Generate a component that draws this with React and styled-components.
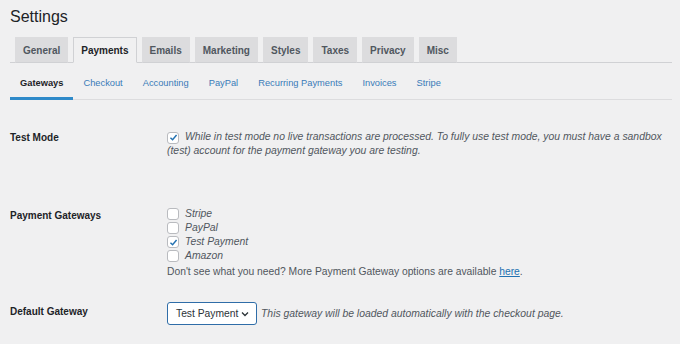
import React from "react";
import styled, { createGlobalStyle } from "styled-components";

const GlobalStyle = createGlobalStyle`
  html, body {
    margin: 0;
    padding: 0;
    background: #f0f0f1;
  }
  body {
    font-family: "Liberation Sans", Arial, sans-serif;
    color: #1d2327;
  }
`;

const Page = styled.div`
  padding: 0 8px 0 10px;
  width: 680px;
  height: 344px;
  box-sizing: border-box;
  overflow: hidden;
`;

const Title = styled.h1`
  margin: 0;
  padding-top: 7px;
  font-size: 16px;
  font-weight: 400;
  line-height: 20px;
  color: #1d2327;
`;

const TabBar = styled.div`
  display: flex;
  gap: 5px;
  margin-top: 10px;
  padding-left: 5px;
  border-bottom: 1px solid #d0d1d4;
  height: 25px;
`;

const Tab = styled.div`
  box-sizing: border-box;
  height: 26px;
  padding: 0 7px;
  display: flex;
  align-items: center;
  font-size: 10px;
  font-weight: 700;
  border: 1px solid ${(p) => (p.$active ? "#d0d1d4" : "#dcdcde")};
  border-bottom-color: ${(p) => (p.$active ? "#f0f0f1" : "#d0d1d4")};
  background: ${(p) => (p.$active ? "#f0f0f1" : "#dcdcde")};
  color: ${(p) => (p.$active ? "#1d2327" : "#50575e")};
`;

const SubNav = styled.div`
  display: flex;
  margin-top: 13px;
  border-bottom: 1px solid #dcdcde;
`;

const SubTab = styled.div`
  padding: 0 10px 7px;
  font-size: 9.3px;
  line-height: 14px;
  font-weight: ${(p) => (p.$active ? 700 : 400)};
  color: ${(p) => (p.$active ? "#1d2327" : "#3a7bb8")};
  border-bottom: 3px solid ${(p) => (p.$active ? "#2f8ac9" : "transparent")};
  margin-bottom: -1px;
`;

const Row = styled.div`
  display: grid;
  grid-template-columns: 157px 1fr;
  padding-top: ${(p) => p.$top}px;
`;

const Label = styled.div`
  margin-top: ${(p) => p.$offset}px;
  font-size: 10px;
  line-height: 14px;
  font-weight: 700;
  color: #1d2327;
`;

const Field = styled.div`
  max-width: 500px;
  font-size: 10.3px;
  line-height: 14px;
  color: #50575e;
`;

const Italic = styled.span`
  font-style: italic;
  font-size: 10.4px;
  color: #50575e;
`;

const Box = styled.span`
  display: inline-flex;
  align-items: center;
  justify-content: center;
  box-sizing: border-box;
  width: 12px;
  height: 12px;
  margin-right: 6px;
  vertical-align: -2px;
  border: 1px solid #b9bbbf;
  border-radius: 3px;
  background: #fff;
`;

const CheckLine = styled.div`
  display: flex;
  align-items: center;
  height: 14px;
`;

const Help = styled.div`
  margin-top: 2px;
  color: #50575e;
`;

const Link = styled.a`
  color: #2271b1;
  text-decoration: underline;
`;

const SelectRow = styled.div`
  display: flex;
  align-items: center;
  white-space: nowrap;
`;

const Select = styled.div`
  box-sizing: border-box;
  width: 90px;
  height: 23px;
  flex-shrink: 0;
  display: flex;
  align-items: center;
  justify-content: space-between;
  padding: 0 7px 0 8px;
  margin-right: 4px;
  border: 1px solid #2f6da8;
  border-radius: 3px;
  background: #fff;
  font-size: 10.3px;
  color: #2c3338;
`;

function Checkbox({ checked }) {
  return (
    <Box>
      {checked && (
        <svg width="9" height="9" viewBox="0 0 10 10">
          <path d="M1.6 5.2 L4 7.5 L8.4 2.2" fill="none" stroke="#2271b1" strokeWidth="1.6" />
        </svg>
      )}
    </Box>
  );
}

const tabs = ["General", "Payments", "Emails", "Marketing", "Styles", "Taxes", "Privacy", "Misc"];
const subTabs = ["Gateways", "Checkout", "Accounting", "PayPal", "Recurring Payments", "Invoices", "Stripe"];
const gateways = [
  { name: "Stripe", on: false },
  { name: "PayPal", on: false },
  { name: "Test Payment", on: true },
  { name: "Amazon", on: false }
];

export default function App() {
  return (
    <Page>
      <GlobalStyle />
      <Title>Settings</Title>
      <TabBar>
        {tabs.map((t) => (
          <Tab key={t} $active={t === "Payments"}>
            {t}
          </Tab>
        ))}
      </TabBar>
      <SubNav>
        {subTabs.map((t) => (
          <SubTab key={t} $active={t === "Gateways"}>
            {t}
          </SubTab>
        ))}
      </SubNav>

      <Row $top={30}>
        <Label $offset={1}>Test Mode</Label>
        <Field>
          <Checkbox checked />
          <Italic>
            While in test mode no live transactions are processed. To fully use test mode, you must have a sandbox
            (test) account for the payment gateway you are testing.
          </Italic>
        </Field>
      </Row>

      <Row $top={49}>
        <Label $offset={2}>Payment Gateways</Label>
        <Field>
          {gateways.map((g) => (
            <CheckLine key={g.name}>
              <Checkbox checked={g.on} />
              <Italic>{g.name}</Italic>
            </CheckLine>
          ))}
          <Help>
            Don't see what you need? More Payment Gateway options are available <Link>here</Link>.
          </Help>
        </Field>
      </Row>

      <Row $top={23}>
        <Label $offset={3}>Default Gateway</Label>
        <Field>
          <SelectRow>
            <Select>
              Test Payment
              <svg width="8" height="6" viewBox="0 0 8 6">
                <path d="M1 1.5 L4 4.5 L7 1.5" fill="none" stroke="#2c3338" strokeWidth="1.3" />
              </svg>
            </Select>
            <Italic>This gateway will be loaded automatically with the checkout page.</Italic>
          </SelectRow>
        </Field>
      </Row>
    </Page>
  );
}
